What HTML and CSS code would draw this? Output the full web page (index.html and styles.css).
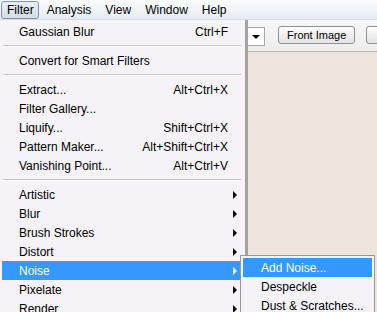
FILE: index.html
```html
<!DOCTYPE html>
<html lang="en">

<head>
    <meta charset="UTF-8">
    <title>Filter menu</title>
    <link rel="stylesheet" href="styles.css">
</head>

<body>
    <div class="app">
        <div class="menubar">
            <span class="menubar-item active">Filter</span>
            <span class="menubar-item">Analysis</span>
            <span class="menubar-item">View</span>
            <span class="menubar-item">Window</span>
            <span class="menubar-item">Help</span>
        </div>
        <div class="toolbar">
            <div class="toolbar-space"></div>
            <div class="combo"><span class="combo-arrow"></span></div>
            <div class="tool-sep"></div>
            <button class="tool-button">Front Image</button>
            <button class="tool-button blank"></button>
        </div>
        <div class="canvas"></div>

        <div class="menu">
            <div class="item"><span>Gaussian Blur</span><span class="key">Ctrl+F</span></div>
            <div class="sep"></div>
            <div class="item"><span>Convert for Smart Filters</span></div>
            <div class="sep"></div>
            <div class="item"><span>Extract...</span><span class="key">Alt+Ctrl+X</span></div>
            <div class="item"><span>Filter Gallery...</span></div>
            <div class="item"><span>Liquify...</span><span class="key">Shift+Ctrl+X</span></div>
            <div class="item"><span>Pattern Maker...</span><span class="key">Alt+Shift+Ctrl+X</span></div>
            <div class="item"><span>Vanishing Point...</span><span class="key">Alt+Ctrl+V</span></div>
            <div class="sep"></div>
            <div class="item sub"><span>Artistic</span><span class="arrow"></span></div>
            <div class="item sub"><span>Blur</span><span class="arrow"></span></div>
            <div class="item sub"><span>Brush Strokes</span><span class="arrow"></span></div>
            <div class="item sub"><span>Distort</span><span class="arrow"></span></div>
            <div class="item sub selected"><span>Noise</span><span class="arrow"></span></div>
            <div class="item sub"><span>Pixelate</span><span class="arrow"></span></div>
            <div class="item sub"><span>Render</span><span class="arrow"></span></div>
        </div>

        <div class="submenu">
            <div class="item selected"><span>Add Noise...</span></div>
            <div class="item"><span>Despeckle</span></div>
            <div class="item"><span>Dust &amp; Scratches...</span></div>
        </div>
    </div>
</body>

</html>
```

FILE: styles.css
```css
body {
    margin: 0;
    font-family: "Liberation Sans", Arial, sans-serif;
    font-size: 12px;
    color: #000000;
}

.app {
    position: relative;
    width: 377px;
    height: 312px;
    overflow: hidden;
    display: flex;
    flex-direction: column;
    background-color: #ece5dc;
}

.menubar {
    height: 20px;
    display: flex;
    align-items: center;
    padding-left: 1px;
    background: linear-gradient(#fbfcfe, #e6ebf3);
    border-bottom: 1px solid #d6dce6;
    box-sizing: border-box;
}

.menubar-item {
    height: 18px;
    line-height: 17px;
    padding: 0 5px;
    margin-right: 2px;
    border: 1px solid transparent;
    border-radius: 3px;
    box-sizing: border-box;
}

.menubar-item.active {
    padding-right: 4px;
    background: linear-gradient(#e9eef5, #d3dce8);
    border-color: #8392a6;
}

.toolbar {
    height: 32px;
    display: flex;
    align-items: center;
    background: linear-gradient(#f7f7f7, #ececec);
    border-bottom: 1px solid #b9b9b9;
    box-sizing: border-box;
}

.toolbar-space {
    width: 245px;
    flex: none;
}

.combo {
    width: 20px;
    height: 19px;
    flex: none;
    background: #ffffff;
    border: 1px solid #a7a7a7;
    border-left: none;
    box-sizing: border-box;
    display: flex;
    align-items: center;
    justify-content: center;
    margin-top: 2px;
}

.combo-arrow {
    width: 0;
    height: 0;
    margin-left: 2px;
    border-left: 4px solid transparent;
    border-right: 4px solid transparent;
    border-top: 4px solid #000000;
}

.tool-sep {
    width: 1px;
    height: 24px;
    margin: 0 8px 0 5px;
    background: #c4c4c4;
    box-shadow: 1px 0 0 #ffffff;
}

.tool-button {
    height: 18px;
    padding: 0 8px;
    margin-right: 11px;
    flex: none;
    font-family: "Liberation Sans", Arial, sans-serif;
    font-size: 11px;
    color: #000000;
    background: linear-gradient(#fdfdfd, #e3e3e3);
    border: 1px solid #8f8f8f;
    border-radius: 3px;
    margin-top: -1px;
}

.tool-button.blank {
    width: 40px;
}

.canvas {
    flex: 1;
    background-color: #ece5dc;
}

.menu {
    position: absolute;
    left: 0;
    top: 20px;
    width: 245px;
    height: 300px;
    padding: 2px;
    box-sizing: border-box;
    background-color: #f5f3f7;
    box-shadow: 3px 0 0 #a3a3a3;
}

.item {
    height: 19px;
    display: flex;
    align-items: center;
    justify-content: space-between;
    padding: 0 15px 0 17px;
    white-space: nowrap;
}

.item.sub {
    padding-right: 6px;
}

.item.selected {
    background-color: #3399ff;
    color: #ffffff;
}

.arrow {
    width: 0;
    height: 0;
    border-top: 4px solid transparent;
    border-bottom: 4px solid transparent;
    border-left: 4px solid #000000;
}

.item.selected .arrow {
    border-left-color: #ffffff;
}

.sep {
    height: 9px;
    display: flex;
    align-items: center;
    padding: 0 2px 1px 1px;
}

.sep::before {
    content: "";
    flex: 1;
    height: 1px;
    background: #c5c5c5;
    border-bottom: 1px solid #ffffff;
}

.submenu {
    position: absolute;
    left: 240px;
    top: 255px;
    width: 135px;
    padding: 2px;
    border: 1px solid #979797;
    box-sizing: border-box;
    background-color: #f5f3f7;
}

.submenu .item {
    padding-left: 18px;
}
```
